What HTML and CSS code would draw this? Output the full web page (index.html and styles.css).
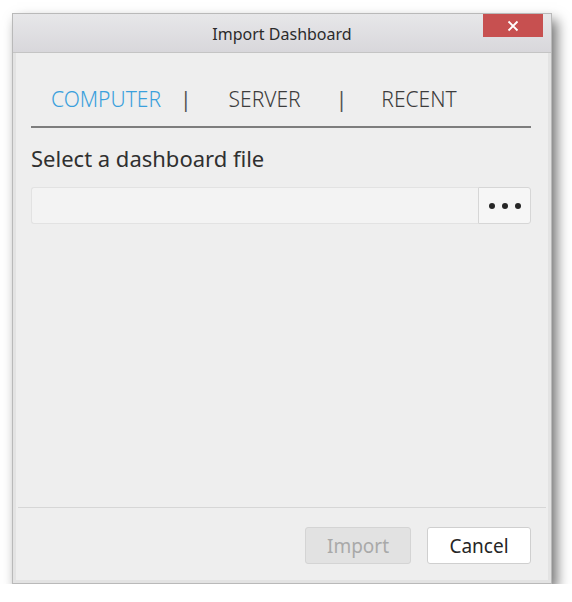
FILE: index.html
```html
<!DOCTYPE html>
<html lang="en">
<head>
  <meta charset="UTF-8" />
  <meta name="viewport" content="width=device-width, initial-scale=1.0" />
  <title>Import Dashboard</title>
  <link rel="stylesheet" href="styles.css">
</head>
<body>
  <div class="window">
    <div class="titlebar">
      <span class="title">Import Dashboard</span>
      <button class="close-btn" aria-label="Close">
        <svg width="12" height="12" viewBox="0 0 12 12">
          <path d="M1.5 1.5 L10.5 10.5 M10.5 1.5 L1.5 10.5" stroke="#fff" stroke-width="1.8" fill="none" />
        </svg>
      </button>
    </div>
    <div class="content">
      <div class="main">
        <div class="tabs">
          <span class="tab active">COMPUTER</span>
          <span class="sep">|</span>
          <span class="tab">SERVER</span>
          <span class="sep sep-last">|</span>
          <span class="tab">RECENT</span>
        </div>
        <div class="label">Select a dashboard file</div>
        <div class="file-row">
          <input class="file-input" type="text" />
          <button class="browse-btn" aria-label="Browse">
            <span class="dot"></span><span class="dot"></span><span class="dot"></span>
          </button>
        </div>
      </div>
      <div class="footer">
        <button class="btn btn-disabled" disabled>Import</button>
        <button class="btn">Cancel</button>
      </div>
    </div>
  </div>
</body>
</html>
```

FILE: styles.css
```css
body {
  margin: 0;
  background: #fff;
  font-family: 'Noto Sans', 'Open Sans', sans-serif;
  padding: 13px 0 0 12px;
}
.window {
  width: 538px;
  height: 569px;
  background: #e3e3e3;
  border: 1px solid #b9b9b9;
  display: flex;
  flex-direction: column;
  box-shadow: 5px 7px 12px rgba(0,0,0,0.55);
}
.titlebar {
  position: relative;
  height: 38px;
  background: linear-gradient(#e7e7e9, #d8d7db);
  border-bottom: 1px solid #c4c4c4;
  display: flex;
  align-items: center;
  justify-content: center;
}
.title {
  font-size: 16px;
  color: #2b2b2b;
  margin-top: 2px;
}
.close-btn {
  position: absolute;
  top: 0;
  right: 8px;
  width: 60px;
  height: 23px;
  background: #c75050;
  border: none;
  padding: 0;
  display: flex;
  align-items: center;
  justify-content: center;
}
.content {
  flex: 1;
  margin: 0 3px 3px 3px;
  background: #eeeeee;
  display: flex;
  flex-direction: column;
}
.main {
  flex: 1;
  padding: 0 17px 0 15px;
}
.tabs {
  display: flex;
  align-items: center;
  height: 75px;
  box-sizing: border-box;
  padding: 18px 0 0 20px;
  border-bottom: 2px solid #7d7d7d;
  font-size: 21px;
  font-weight: 300;
  color: #3c3c3c;
}
.tab.active { color: #3aa0dc; }
.sep { color: #555; margin: 0 37px 0 19px; font-weight: 400; }
.sep-last { margin: 0 34px 0 35px; }
.label {
  font-size: 22px;
  color: #303030;
  margin: 15px 0 0 0;
  height: 32px;
}
.file-row {
  display: flex;
  margin-top: 12px;
  height: 37px;
}
.file-input {
  flex: 1;
  border: 1px solid #e2e2e2;
  border-right: none;
  border-radius: 3px 0 0 3px;
  background: #f3f3f3;
  margin: 0;
  outline: none;
}
.browse-btn {
  width: 53px;
  border: 1px solid #d6d6d6;
  border-radius: 0 3px 3px 0;
  background: #f6f6f6;
  display: flex;
  align-items: center;
  justify-content: center;
  gap: 7px;
  padding: 0;
}
.dot {
  width: 6px;
  height: 6px;
  border-radius: 50%;
  background: #262626;
}
.footer {
  border-top: 1px solid #d6d6d6;
  margin: 0 2px 0 2px;
  height: 73px;
  display: flex;
  justify-content: flex-end;
  align-items: flex-start;
  gap: 16px;
  padding: 19px 15px 0 0;
  box-sizing: border-box;
}
.btn {
  width: 104px;
  height: 37px;
  background: #fff;
  border: 1px solid #cfcfcf;
  border-radius: 3px;
  font-family: inherit;
  font-size: 19px;
  color: #262626;
  padding: 0;
}
.btn-disabled {
  width: 106px;
  background: #e2e2e2;
  border-color: #d4d4d4;
  color: #a9a9a9;
}
```
